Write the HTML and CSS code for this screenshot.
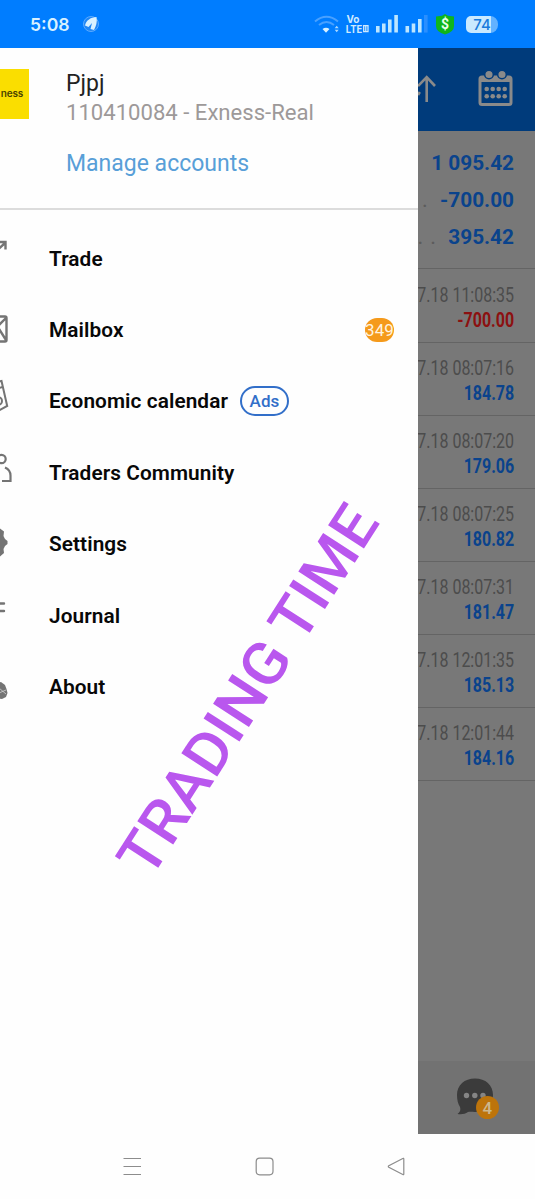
FILE: index.html
```html
<!DOCTYPE html>
<html lang="en">
<head>
  <meta charset="UTF-8" />
  <meta name="viewport" content="width=device-width, initial-scale=1.0"/>
  <title>Trading accounts</title>
  <link rel="stylesheet" href="styles.css">
</head>
<body>
  <header class="status">
    <span class="clock">5:08</span>
    <svg class="status-app" width="18" height="18" viewBox="0 0 18 18">
      <circle cx="9" cy="9" r="7.500" fill="#1f86f5" stroke="#5aaaff" stroke-width="1"/>
      <path d="M14.500 2C9 2 4 5.500 3 10.500l3.500 1.500 3.500-4-1.500 6 3.500 1C14 11 15.500 7 14.500 2z" fill="#d9f1ff"/>
    </svg>
    <svg class="status-icons" width="121" height="24" viewBox="314 12 121 24">
      <g fill="none" stroke="#49a1ff" stroke-width="2">
        <path d="M315 21.500q11.500-9.500 23 0M319 25q7.500-6 15 0"/>
      </g>
      <path d="M322.500 29q3.500-2.500 7 0l-3.500 3.800z" fill="#d9f1ff"/>
      <path d="M334.700 28.200l2-2.500 2 2.500zM334.700 29.800l2 2.500 2-2.500z" fill="#a9d8ff"/>
      <text class="lte" x="346.500" y="22.500">Vo</text>
      <text class="lte" x="345.700" y="32.500" textLength="16.500" lengthAdjust="spacingAndGlyphs">LTE</text>
      <path d="M363.700 25.700h4.300v6h-4.300zM365.800 26v6" fill="none" stroke="#cfeaff" stroke-width="1.300"/>
      <path d="M376 26h3.600v6.600H376zM382 23.500h3.600v9.100H382zM388 19.500h3.600v13.100H388zM394.300 15h3.600v17.600h-3.600zM405.500 26h3.600v6.600h-3.600zM411.700 23.500h3.600v9.100h-3.600zM418 19h3.600v13.600H418z" fill="#bde6ff"/>
      <path d="M424 15h3.600v17.600H424z" fill="#2a8fff"/>
    </svg>
    <svg class="shield" width="20" height="22" viewBox="0 0 20 22">
      <path d="M10 1l3 1.800 6 .7v9.500q0 6-9 8.500-9-2.500-9-8.500V3.500l6-.7z" fill="#0fb51c"/>
      <text x="10" y="16" text-anchor="middle" class="dollar">$</text>
    </svg>
    <span class="battery">74</span>
  </header>

  <main>
    <aside class="drawer">
      <section class="account">
        <div class="broker">ness</div>
        <div class="account-info">
          <div class="name">Pjpj</div>
          <div class="server">110410084 - Exness-Real</div>
          <a class="manage">Manage accounts</a>
        </div>
      </section>
      <ul class="menu">
        <li>
          <svg class="icon" viewBox="0 0 40 60"><path d="M-8 26L5 14M-1 13h6.500v7.500" fill="none" stroke="#747474" stroke-width="2.400"/></svg>
          <span>Trade</span>
        </li>
        <li>
          <svg class="icon" viewBox="0 0 40 60"><path d="M-16 16.500H5q1.500 0 1.500 1.500v22q0 1.500-1.500 1.500H-16M6 18L-5 29M-1 29L6 40" fill="none" stroke="#747474" stroke-width="2.400"/></svg>
          <span>Mailbox</span>
          <span class="count">349</span>
        </li>
        <li>
          <svg class="icon" viewBox="0 0 40 60"><path d="M-4 11L1.500 10 7.200 35-4 41M-4 18l6.500-2" fill="none" stroke="#747474" stroke-width="2"/><circle cx="-2" cy="30" r="4" fill="none" stroke="#747474" stroke-width="2"/></svg>
          <span>Economic calendar</span>
          <span class="ads">Ads</span>
        </li>
        <li>
          <svg class="icon" viewBox="0 0 40 60"><circle cx="1.500" cy="16" r="4.200" fill="none" stroke="#747474" stroke-width="2.200"/><path d="M5 24.500q5.500 2.500 5.500 8V38H2" fill="none" stroke="#747474" stroke-width="2.200"/></svg>
          <span>Traders Community</span>
        </li>
        <li>
          <svg class="icon" viewBox="0 0 40 60"><path d="M-4 14.500H0l4 3-.5 4.500 1.500 3 2.500 2v3L5 32l-1.500 3 .5 4-4 3.500h-4z" fill="#747474"/></svg>
          <span>Settings</span>
        </li>
        <li>
          <svg class="icon" viewBox="0 0 40 60"><path d="M-5 17.500H4M-5 25H4" stroke="#747474" stroke-width="2.400" stroke-linecap="round"/></svg>
          <span>Journal</span>
        </li>
        <li>
          <svg class="icon" viewBox="0 0 40 60"><path d="M-4 26l5-1 4 3 1.500 4 1 4-1.500 4-4 2-6-1z" fill="#747474"/><path d="M-1 31l7 6M-1 36l7-3" stroke="#d0d0d0" stroke-width=".8"/></svg>
          <span>About</span>
        </li>
      </ul>
    </aside>

    <section class="history">
      <div class="toolbar">
        <svg width="117" height="83" viewBox="418 48 117 83">
          <path d="M426.700 102V77.500M418 86l8.700-8.800 8.300 8.800M418 95l1.800-3" fill="none" stroke="#8a8a8a" stroke-width="2.600"/>
          <rect x="480" y="77" width="31" height="27.500" rx="2" fill="none" stroke="#8a8a8a" stroke-width="3"/>
          <path d="M480 76h31v6h-31z" fill="#8a8a8a"/>
          <g fill="#8a8a8a" stroke="#003b7b" stroke-width="1.500"><circle cx="489" cy="74.500" r="4.300"/><circle cx="502" cy="74.500" r="4.300"/></g>
          <g fill="#8a8a8a"><circle cx="486.700" cy="89" r="2.300"/><circle cx="492.700" cy="89" r="2.300"/><circle cx="498.700" cy="89" r="2.300"/><circle cx="504.700" cy="89" r="2.300"/><circle cx="486.700" cy="96.300" r="2.300"/><circle cx="492.700" cy="96.300" r="2.300"/><circle cx="498.700" cy="96.300" r="2.300"/><circle cx="504.700" cy="96.300" r="2.300"/></g>
        </svg>
      </div>
      <div class="summary">
        <div>1 095.42</div>
        <div><i class="dots">.</i>-700.00</div>
        <div><i class="dots wide">. .</i>395.42</div>
      </div>
      <div class="deal"><span class="time">7.18 11:08:35</span><b class="loss">-700.00</b></div>
      <div class="deal"><span class="time">7.18 08:07:16</span><b>184.78</b></div>
      <div class="deal"><span class="time">7.18 08:07:20</span><b>179.06</b></div>
      <div class="deal"><span class="time">7.18 08:07:25</span><b>180.82</b></div>
      <div class="deal"><span class="time">7.18 08:07:31</span><b>181.47</b></div>
      <div class="deal"><span class="time">7.18 12:01:35</span><b>185.13</b></div>
      <div class="deal"><span class="time">7.18 12:01:44</span><b>184.16</b></div>
      <div class="tabs">
        <svg width="50" height="48" viewBox="450 1072 50 48">
          <path d="M475 1078.500c10.500 0 18 6.500 18 16.500s-7.500 17-18 17c-3 0-5-.5-7 0-3 2-6 2.500-10.500 2 2.500-2 3.500-4 2.500-7-2-3-3-7-3-12 0-10 7.500-16.500 18-16.500z" fill="#3b3b3b"/>
          <g fill="#858585"><circle cx="466.500" cy="1095.500" r="2.700"/><circle cx="474.800" cy="1095.500" r="2.700"/><circle cx="483" cy="1095.500" r="2.700"/></g>
          <circle cx="487.500" cy="1107.500" r="11.500" fill="#bd740b"/>
          <text class="unread" x="487.300" y="1113.500" text-anchor="middle">4</text>
        </svg>
      </div>
    </section>
  </main>

  <footer class="navbar">
    <svg width="535" height="65" viewBox="0 1134 535 65" fill="none" stroke="#8c8c8c" stroke-width="1.200">
      <path d="M123.500 1158.500h17.500M123.500 1166.500h17.500M123.500 1174.500h17.500"/>
      <rect x="256.200" y="1158.200" width="16.800" height="16.600" rx="3.500"/>
      <path d="M403.800 1159v15q0 1-1 .5l-14-7.200q-1-.8 0-1.600l14-7.200q1-.5 1 .5z"/>
    </svg>
  </footer>

  <svg class="watermark" width="535" height="1199" viewBox="0 0 535 1199">
    <text transform="translate(150 880.500) rotate(-57.200)" textLength="426" lengthAdjust="spacingAndGlyphs">TRADING TIME</text>
  </svg>
</body>
</html>
```

FILE: styles.css
```css
* {
  box-sizing: border-box;
}
body {
  margin: 0;
  width: 535px;
  height: 1199px;
  background: #fefefe;
  font-family: Roboto, "Liberation Sans", sans-serif;
  overflow: hidden;
  position: relative;
}
.status {
  height: 48px;
  background: #007dff;
  display: flex;
  align-items: center;
  padding-left: 30px;
}
.clock {
  width: 52px;
  color: #d9f1ff;
  font-family: Inter, sans-serif;
  font-size: 17.6px;
  font-weight: 600;
}
.status-icons {
  margin-left: 214px;
  flex: none;
}
.lte {
  font: 700 10px Inter, sans-serif;
  fill: #cfeaff;
}
.dollar {
  font: 700 14px Roboto, sans-serif;
  fill: #eaffea;
}
.battery {
  margin-left: 11px;
  width: 32px;
  height: 17px;
  border-radius: 5px 8px 8px 5px;
  background: linear-gradient(to right, #c9e9ff 25px, #63b2ff 25px);
  color: #187bdc;
  font: 500 15px/18px Inter, sans-serif;
  text-align: center;
}
main {
  display: flex;
  height: 1086px;
}
.drawer {
  width: 418px;
  background: #fefefe;
  overflow: hidden;
}
.account {
  display: flex;
  height: 162px;
  border-bottom: 2px solid #dcdcdc;
}
.broker {
  width: 29px;
  height: 50px;
  margin-top: 21px;
  padding-right: 6px;
  background: #fade00;
  color: #4a4300;
  font: 600 10px/48px Inter, sans-serif;
  letter-spacing: -0.2px;
  text-align: right;
}
.account-info {
  padding: 21px 0 0 37px;
  white-space: nowrap;
}
.name {
  color: #222;
  font-size: 23px;
  line-height: 29px;
}
.server {
  color: #9d9999;
  font-size: 22.1px;
  line-height: 28px;
}
.manage {
  display: block;
  margin-top: 24px;
  color: #589fd8;
  font-size: 23px;
  line-height: 28px;
}
.menu {
  list-style: none;
  margin: 0;
  padding: 13px 0 0;
}
.menu li {
  height: 71.4px;
  display: flex;
  align-items: center;
  color: #080808;
  font-size: 20.8px;
  font-weight: 600;
  letter-spacing: 0.08px;
}
.icon {
  width: 40px;
  height: 60px;
  margin-right: 9px;
}
.count {
  margin: 0 24px 0 auto;
  width: 29px;
  height: 24px;
  border-radius: 12px;
  background: #f59a1b;
  color: #fff3df;
  font-size: 17px;
  font-weight: 400;
  line-height: 25px;
  display: flex;
  justify-content: center;
}
.ads {
  margin-left: 12px;
  width: 49px;
  height: 30px;
  border: 2px solid #326fc9;
  border-radius: 15px;
  color: #326fc9;
  font-size: 17px;
  font-weight: 500;
  line-height: 27px;
  text-align: center;
}
.history {
  flex: 1;
  background: #787878;
  display: flex;
  flex-direction: column;
  overflow: hidden;
}
.toolbar {
  height: 83px;
  background: #003b7b;
}
.summary {
  height: 138px;
  padding: 13.5px 21px 0 0;
  border-bottom: 1px solid #646464;
  color: #0a438c;
  font-size: 20.8px;
  font-weight: 700;
  line-height: 37.3px;
  text-align: right;
  white-space: nowrap;
}
.summary div {
  height: 37.3px;
}
.dots {
  margin-right: 13px;
  color: #5c5c5c;
  font-size: 16px;
  font-style: normal;
}
.wide {
  margin-left: -10px;
  word-spacing: 4px;
}
.deal {
  height: 73px;
  padding: 13px 21px 0 0;
  border-bottom: 1px solid #646464;
  display: flex;
  flex-direction: column;
  align-items: flex-end;
  font-size: 20px;
  line-height: 25px;
  white-space: nowrap;
}
.summary + .deal {
  height: 74px;
  padding-top: 14px;
}
/* narrow figures of the deal list */
.time, .deal b {
  transform: scaleX(0.8);
  transform-origin: right;
}
.time {
  color: #4c4c4c;
}
.deal b {
  color: #0a438c;
}
.deal .loss {
  color: #8c1010;
}
.tabs {
  margin-top: auto;
  height: 73px;
  padding: 11px 0 0 32px;
  background: #727272;
}
.unread {
  font: 500 17px Roboto, sans-serif;
  fill: #ccb88f;
}
.navbar {
  height: 65px;
}
.watermark {
  position: absolute;
  left: 0;
  top: 0;
}
.watermark text {
  font: 500 60px Roboto, sans-serif;
  fill: #b957ee;
}
```
